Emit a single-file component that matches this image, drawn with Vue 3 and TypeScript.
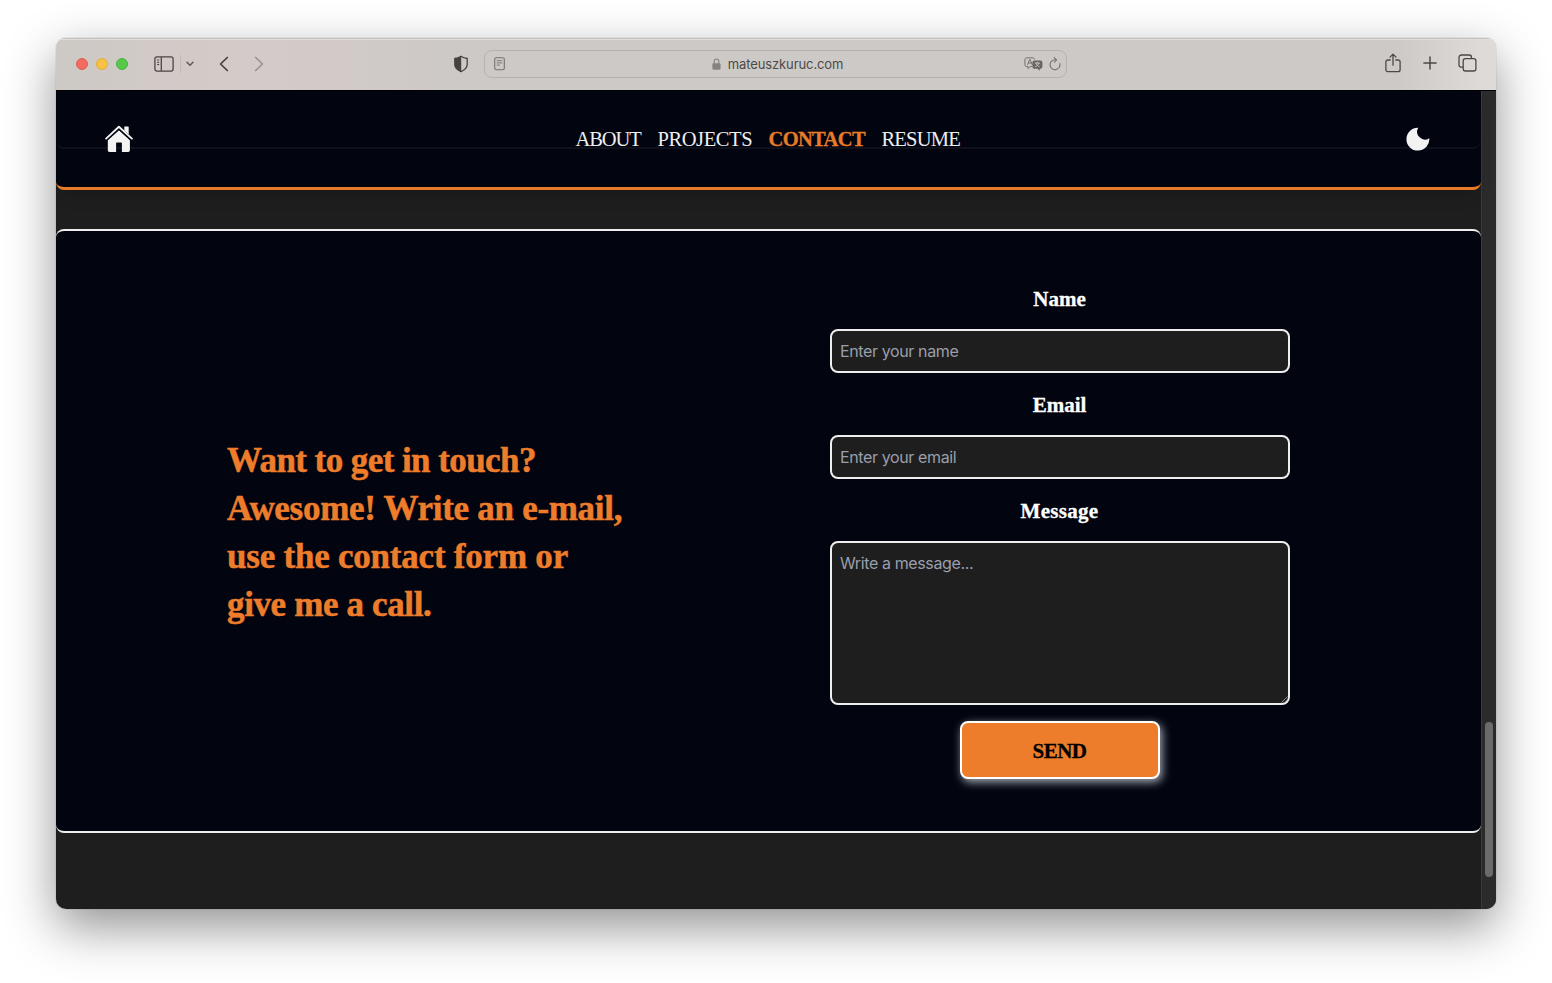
<script setup lang="ts">
interface NavItem {
  label: string
  key: string
  active?: boolean
}
interface Field {
  label: string
  key: string
  placeholder: string
}

const navItems: NavItem[] = [
  { label: 'ABOUT', key: 'about' },
  { label: 'PROJECTS', key: 'projects' },
  { label: 'CONTACT', key: 'contact', active: true },
  { label: 'RESUME', key: 'resume' },
]

const headline: string[] = [
  'Want to get in touch?',
  'Awesome! Write an e-mail,',
  'use the contact form or',
  'give me a call.',
]

const fields: Field[] = [
  { label: 'Name', key: 'name', placeholder: 'Enter your name' },
  { label: 'Email', key: 'email', placeholder: 'Enter your email' },
]
</script>

<template>
  <div class="desktop">
    <div class="window">
      <div class="toolbar">
        <div class="tools-left">
          <span class="light red"></span>
          <span class="light yellow"></span>
          <span class="light green"></span>
          <svg class="sidebar-icon" width="20" height="16" viewBox="0 0 20 16" fill="none" stroke="#4b4543" stroke-width="1.3">
            <rect x="0.9" y="0.9" width="18.2" height="14.2" rx="2" />
            <path d="M7.3 1v14" />
            <path d="M3 4h2.2M3 6.3h2.2M3 8.6h2.2" stroke-width="1" />
          </svg>
          <span class="separator"></span>
          <svg class="chevron-down" width="8" height="6" viewBox="0 0 8 6" fill="none" stroke="#615a58" stroke-width="1.5" stroke-linecap="round" stroke-linejoin="round">
            <path d="M1 1.2l3 3 3-3" />
          </svg>
          <svg class="back" width="10" height="16" viewBox="0 0 10 16" fill="none" stroke="#46403e" stroke-width="1.7" stroke-linecap="round" stroke-linejoin="round">
            <path d="M8.3 1.5L1.6 8l6.7 6.5" />
          </svg>
          <svg class="forward" width="10" height="16" viewBox="0 0 10 16" fill="none" stroke="#9a9290" stroke-width="1.7" stroke-linecap="round" stroke-linejoin="round">
            <path d="M1.7 1.5L8.4 8l-6.7 6.5" />
          </svg>
        </div>
        <svg class="shield" width="16" height="18" viewBox="0 0 16 18">
          <path d="M8 1.3c2 1.4 4 2 6.2 2.2v6c0 3.400-2.500 5.400-6.200 7.200c-3.700-1.800-6.200-3.800-6.200-7.200v-6C4 3.300 6 2.700 8 1.300z" fill="none" stroke="#45423f" stroke-width="1.3" stroke-linejoin="round" />
          <path d="M8.200 1.300C6 2.700 4 3.300 1.800 3.500v6c0 3.400 2.500 5.400 6.400 7.200z" fill="#45423f" />
        </svg>
        <div class="address">
          <svg class="reader" width="11" height="14" viewBox="0 0 11 14" fill="none" stroke="#74716e">
            <rect x="0.7" y="0.7" width="9.600" height="12.100" rx="1.500" stroke-width="1.100" />
            <path d="M2.700 3.700h5.600M2.700 5.900h5.600M2.700 8.100h3.200" stroke-width="0.900" />
          </svg>
          <div class="domain">
            <svg width="9" height="12" viewBox="0 0 9 12">
              <path d="M2.200 6V3.500a2.300 2.500 0 0 1 4.600 0V6" fill="none" stroke="#858280" stroke-width="1.100" />
              <rect x="0.400" y="5.300" width="8.200" height="6.400" rx="1.100" fill="#858280" />
            </svg>
            <span>mateuszkuruc.com</span>
          </div>
          <div class="address-tools">
            <svg width="19" height="14" viewBox="0 0 19 14">
              <path d="M8 9.500H6.300L4 11.600V9.500H2.800A1.900 1.900 0 0 1 .9 7.600V2.700A1.900 1.900 0 0 1 2.800 .8h5.900a1.900 1.900 0 0 1 1.900 1.500" fill="none" stroke="#74716e" stroke-width="1" />
              <path d="M3.500 7.800L5.600 2.500h.5l2.100 5.300M4.300 6h3.100" fill="none" stroke="#74716e" stroke-width="1" />
              <path d="M10.400 3.500h6a2 2 0 0 1 2 2v4.300a2 2 0 0 1-2 2h-.6v2l-2.200-2h-3.200a2 2 0 0 1-2-2V5.500a2 2 0 0 1 2-2z" fill="#676461" />
              <path d="M10.800 6h5.200M13.400 4.900V6M11.800 6c.500 1.900 1.900 3 3.800 3.800M15 6c-.500 1.900-1.900 3-3.800 3.800" fill="none" stroke="#cdc9c6" stroke-width="0.900" />
            </svg>
            <svg width="12" height="14" viewBox="0 0 12 14" fill="none" stroke="#74716e" stroke-width="1.100" stroke-linecap="round" stroke-linejoin="round">
              <path d="M10.900 6.600a5 5 0 1 1-4.900-3.900h1.300" />
              <path d="M5.200 .7l2.300 2.100L5.400 5.100" />
            </svg>
          </div>
        </div>
        <div class="tools-right">
          <svg width="16" height="20" viewBox="0 0 16 20" fill="none" stroke="#4b4845" stroke-width="1.300" stroke-linecap="round" stroke-linejoin="round">
            <path d="M5.200 7H2.800a1.900 1.900 0 0 0-1.900 1.900v7.900a1.900 1.900 0 0 0 1.900 1.900h10.400a1.900 1.900 0 0 0 1.900-1.900V8.900A1.900 1.900 0 0 0 13.200 7h-2.400" />
            <path d="M8 12.200V1.300M5 4.100l3-3 3 3" />
          </svg>
          <svg width="14" height="14" viewBox="0 0 14 14" fill="none" stroke="#4b4845" stroke-width="1.500" stroke-linecap="round">
            <path d="M7 .9v12.200M.9 7h12.200" />
          </svg>
          <svg width="19" height="18" viewBox="0 0 19 18" fill="none" stroke="#4b4845" stroke-width="1.300">
            <rect x="5.200" y="4.700" width="12.700" height="12.300" rx="2.200" />
            <path d="M5.200 13.200H3.300A2.300 2.300 0 0 1 1 10.900V3.300A2.300 2.300 0 0 1 3.300 1h7.900a2.300 2.300 0 0 1 2.300 2.300v1.400" />
          </svg>
        </div>
      </div>

      <div class="viewport">
        <div class="page">
          <header class="site-header">
            <svg class="home" width="28" height="28" viewBox="0 0 28 28" fill="#f3f3f4">
              <path d="M14 5.200L24.900 15.200V25.300a1.700 1.700 0 0 1-1.700 1.700H16.900V18.300a.8.8 0 0 0-.8-.8H11.900a.8.8 0 0 0-.8.8V27H4.500a1.700 1.700 0 0 1-1.700-1.700V15.200z" />
              <path d="M1 14.200L13.900 2.800 26.800 14.200" fill="none" stroke="#020510" stroke-width="3.400" />
              <path d="M19.300 1.400h3.800a.6.600 0 0 1 .6.600v7.400l-4.400-4z" />
              <path d="M1.100 13.600L13.900 1.700 26.900 13.600" fill="none" stroke="#f3f3f4" stroke-width="1.900" stroke-linecap="round" stroke-linejoin="round" />
            </svg>
            <nav>
              <a v-for="item in navItems" :key="item.key" :class="[item.key, { active: item.active }]">{{ item.label }}</a>
            </nav>
            <svg class="moon" width="24" height="24" viewBox="0 0 24 24" fill="#f3f3f4">
              <path d="M12.300 .7A7.800 7.800 0 0 0 23.300 11.200A11.450 11.450 0 1 1 12.300 .7z" />
            </svg>
            <div class="previous-edge"></div>
          </header>

          <section class="contact-section">
            <h2>
              <span v-for="(line, i) in headline" :key="line" :class="`line-${i + 1}`">{{ line }}</span>
            </h2>
            <form @submit.prevent>
              <template v-for="field in fields" :key="field.key">
                <label :for="field.key" :class="field.key">{{ field.label }}</label>
                <input :id="field.key" type="text" :placeholder="field.placeholder" />
              </template>
              <label for="message" class="message">Message</label>
              <div class="message-box">
                <textarea id="message" placeholder="Write a message..."></textarea>
                <svg class="grip" width="7" height="7" viewBox="0 0 7 7" stroke="#a5a5a5" stroke-width="0.800">
                  <path d="M.5 6.500l6-6M3.800 6.500l2.700-2.700" />
                </svg>
              </div>
              <button type="submit">SEND</button>
            </form>
          </section>
        </div>
        <div class="scrollbar"><div class="thumb"></div></div>
      </div>
    </div>
  </div>
</template>

<style>
html,
body {
  margin: 0;
  background: #fff;
  overflow: hidden;
}
</style>

<style scoped>
* {
  box-sizing: border-box;
}
svg {
  display: block;
  flex: none;
}
.desktop {
  width: 1552px;
  height: 983px;
  padding: 38px 56px 0;
  background: #fff;
  overflow: hidden;
}
.window {
  width: 1440px;
  height: 871px;
  border-radius: 10px;
  overflow: hidden;
  display: flex;
  flex-direction: column;
  box-shadow: 0 0 1px rgba(0, 0, 0, 0.5), 0 18px 50px rgba(0, 0, 0, 0.43);
}
.toolbar {
  height: 52px;
  flex: none;
  display: flex;
  align-items: center;
  background: linear-gradient(90deg, #cdc9c5 0, #d4cac8 160px, #d3cac9 220px, #cdc9c6 400px, #cdc9c6 1340px, #dedad7 1425px);
  box-shadow: inset 0 1px 0 #c3c0be, inset 0 2px 0 #e0dddb;
}
.tools-left {
  width: 397px;
  height: 52px;
  padding-left: 20px;
  display: flex;
  align-items: center;
}
.light {
  width: 12px;
  height: 12px;
  border-radius: 50%;
  margin-right: 8px;
}
.red {
  background: #f26b5e;
  border: 1px solid #e05f54;
}
.yellow {
  background: #f7c145;
  border: 1px solid #e2ad3a;
}
.green {
  background: #56c84c;
  border: 1px solid #48b440;
}
.sidebar-icon {
  margin-left: 18px;
  margin-bottom: 1px;
}
.separator {
  width: 1px;
  height: 18px;
  margin: 0 5px 0 6px;
  background: #c3bab8;
}
.chevron-down {
  margin-right: 25px;
}
.back,
.forward {
  margin-bottom: 1px;
}
.forward {
  margin-left: 25px;
}
.shield {
  margin: 0 15px 1px 0;
}
.address {
  width: 583px;
  height: 28px;
  border: 1px solid #b6b2af;
  border-radius: 8px;
  display: flex;
  align-items: center;
  justify-content: space-between;
  padding: 0 5px 0 9px;
  font: 13px/16px Inter, "Liberation Sans", sans-serif;
  letter-spacing: -0.1px;
  color: #4c4a48;
}
.reader {
  margin-bottom: 1px;
}
.domain {
  display: flex;
  align-items: center;
  gap: 7px;
  margin-left: 26px;
}
.address-tools {
  display: flex;
  align-items: center;
  gap: 6px;
  margin-bottom: 1px;
}
.tools-right {
  margin-left: auto;
  margin-right: 19px;
  margin-bottom: 2px;
  display: flex;
  align-items: center;
  gap: 21.5px;
}
.viewport {
  flex: 1;
  display: flex;
  background: #1e1e1e;
  border-top: 1px solid #000;
}
.page {
  width: 1425px;
}
.site-header {
  position: relative;
  height: 99px;
  padding: 0 51px 0 49px;
  display: flex;
  align-items: center;
  justify-content: space-between;
  background: #020510;
  border-bottom: 3px solid #e87b28;
  border-radius: 0 0 8px 8px;
  box-shadow: 0 10px 15px -3px rgba(0, 0, 0, 0.14);
}
.previous-edge {
  position: absolute;
  left: 0;
  right: 0;
  top: 0;
  height: 58px;
  border-bottom: 2px solid rgba(255, 255, 255, 0.05);
  border-radius: 8px;
}
nav {
  display: flex;
  gap: 16px;
  margin: 0 3px 1px 0;
  color: #eeeeef;
  font: 20.5px/28px "Liberation Serif", serif;
}
nav a.about {
  width: 66px;
  letter-spacing: -1.1px;
}
nav a.projects {
  width: 95px;
  letter-spacing: -0.42px;
}
nav a.contact {
  width: 97px;
  letter-spacing: -0.65px;
}
nav a.resume {
  width: 79px;
  letter-spacing: -0.8px;
}
nav a.active {
  color: #e87b28;
  font-weight: 700;
  -webkit-text-stroke: 0.3px currentColor;
}
.contact-section {
  height: 604px;
  margin-top: 39px;
  padding-left: 171px;
  display: flex;
  background: #020510;
  border-top: 2px solid #eeeeef;
  border-bottom: 2px solid #eeeeef;
  border-radius: 8px;
}
h2 {
  width: 603px;
  margin: 206px 0 0;
  color: #ee7d2b;
  font: 700 35px/48px "Liberation Serif", serif;
  -webkit-text-stroke: 0.5px currentColor;
}
h2 span {
  display: block;
}
.line-1 {
  letter-spacing: -0.57px;
}
.line-2 {
  letter-spacing: -0.29px;
}
.line-3 {
  letter-spacing: -0.22px;
}
.line-4 {
  letter-spacing: -0.37px;
}
form {
  width: 460px;
  padding-top: 36px;
  display: flex;
  flex-direction: column;
  align-items: center;
}
label {
  height: 62px;
  padding: 1px 1px 0 0;
  color: #fff;
  font: 700 21px/62px "Liberation Serif", serif;
  -webkit-text-stroke: 0.3px currentColor;
}
label.message {
  letter-spacing: 0.3px;
}
input,
textarea {
  display: block;
  width: 460px;
  margin: 0;
  padding: 8px;
  border: 2px solid #eeeeef;
  border-radius: 8px;
  outline: none;
  background: #1e1e1e;
  color: #fff;
  font: 16px/24px Inter, "Liberation Sans", sans-serif;
  letter-spacing: -0.38px;
}
input {
  height: 44px;
}
textarea {
  height: 164px;
  resize: none;
}
::placeholder {
  color: #9a9fab;
  opacity: 1;
}
.message-box {
  position: relative;
}
.grip {
  position: absolute;
  right: 2px;
  bottom: 2px;
}
button {
  width: 200px;
  height: 58px;
  margin-top: 16px;
  padding: 1px 1px 0 0;
  border: 2px solid #fff;
  border-radius: 8px;
  background: #ee7d2b;
  color: #000;
  font: 700 21px/28px "Liberation Serif", serif;
  letter-spacing: -0.5px;
  -webkit-text-stroke: 0.3px currentColor;
  box-shadow: 2px 3px 10px rgba(226, 232, 240, 0.75);
}
.scrollbar {
  width: 15px;
  padding: 631px 3px 0;
  background: #2b2b2b;
  border-left: 1px solid #3b3b3b;
}
.thumb {
  width: 8px;
  height: 155px;
  border-radius: 4px;
  background: #6b6b6b;
}
</style>
